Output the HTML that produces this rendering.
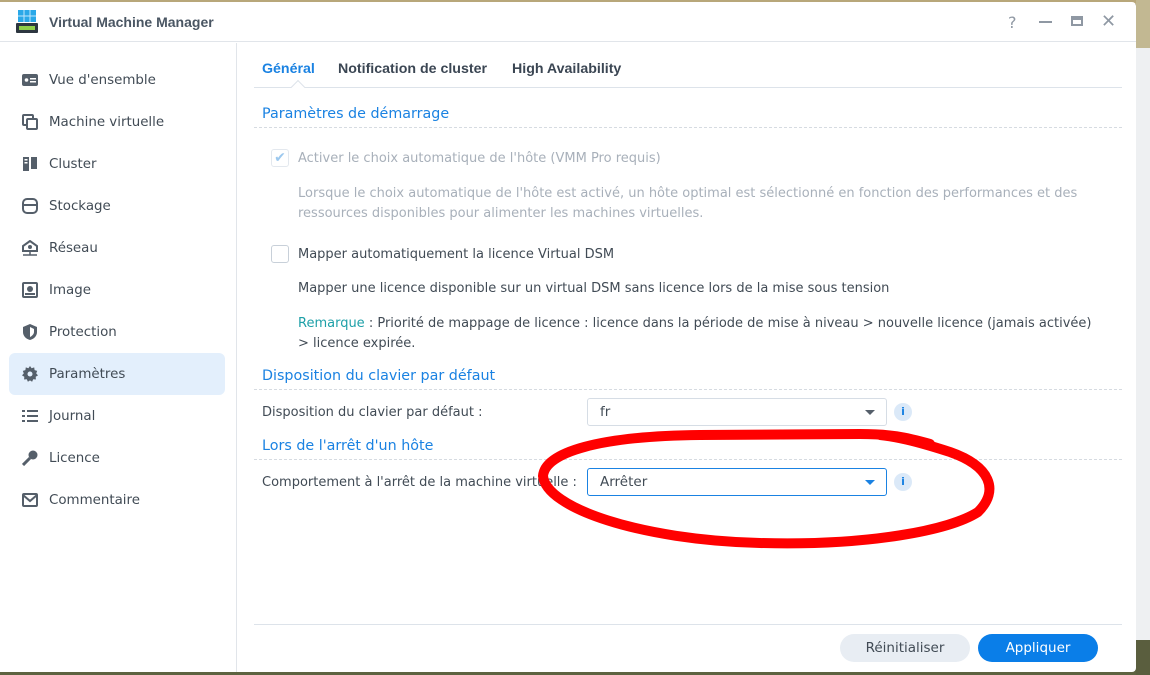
<!DOCTYPE html>
<html><head><meta charset="utf-8"><style>
*{box-sizing:border-box;margin:0;padding:0}
body{width:1150px;height:675px;overflow:hidden;position:relative;font-family:"DejaVu Sans",sans-serif;font-size:13px;color:#414b55;background:#5d6240}
.bgtop{position:absolute;left:0;top:0;width:1150px;height:4px;background:#b8a77a}
.bgright{position:absolute;left:1136px;top:0;width:14px;height:675px;background:linear-gradient(#c2b892 0,#c2b892 48px,#eef0f2 48px,#eef0f2 640px,#5a5e3e 640px)}
.win{position:absolute;left:0;top:2px;width:1136px;height:670px;background:#fff;border-radius:0 4px 4px 0}
.hdr{height:40px;border-bottom:1px solid #e1e5ea;position:relative}
.hdr .t{position:absolute;left:49px;top:12px;font-weight:bold;font-size:14px;color:#4a5663;font-family:"Liberation Sans",sans-serif}
.side{position:absolute;left:0;top:41px;width:237px;bottom:0;border-right:1px solid #e1e5ea}
.it{position:absolute;left:9px;width:216px;height:42px;border-radius:6px;line-height:44px;padding-left:40px;font-size:13.4px}
.it.sel{background:#e3effc}
.it svg{position:absolute;left:13px;top:13px}
.tabs{position:absolute;left:254px;top:44px;width:868px;height:44px;border-bottom:1px solid #dde3ea;font-family:"Liberation Sans",sans-serif}
.tab{position:absolute;top:17px;font-weight:bold;font-size:14.2px;color:#3b4653}
.sec{position:absolute;left:254px;width:868px;color:#1a82e2;font-size:14.3px;padding-left:8px;border-bottom:1px dashed #d6dbe1;height:25px;line-height:22px}
.txt{position:absolute;font-size:13px}
.g{color:#a8b0ba}
.sel2{position:absolute;left:587px;width:300px;height:28px;border:1px solid #d6dde5;border-radius:3px;padding-left:12px;line-height:27px;font-size:13.5px}
.sel2:after{content:"";position:absolute;right:11px;top:11px;border:5px solid transparent;border-top:5px solid #555f6a}
.sel2.b{border-color:#1a82e2}.sel2.b:after{border-top-color:#1a82e2}
.info{position:absolute;left:894px;width:18px;height:18px;border-radius:50%;background:#dbe9f8;color:#1a82e2;font-weight:bold;font-size:11px;text-align:center;line-height:18px}
.btn{position:absolute;top:634px;height:28px;border-radius:14px;text-align:center;line-height:29px;font-size:13.5px}
</style></head><body>
<div class="bgtop"></div><div class="bgright"></div>
<div class="win">
<div class="hdr">
<svg style="position:absolute;left:16px;top:8px" width="22" height="24" viewBox="0 0 22 24"><rect x="2" y="0" width="18" height="12" fill="#2aa8e8"/><path d="M8 0v12M14 0v12M2 6h18" stroke="#bfe6fb" stroke-width="1"/><rect x="0" y="13" width="22" height="10" rx="1" fill="#2d3640"/><rect x="3" y="16" width="16" height="4" fill="#8fcf4a"/></svg>
<div class="t">Virtual Machine Manager</div>
<div style="position:absolute;left:1008px;top:11px;font-size:16px;color:#8f98a3">?</div>
<div style="position:absolute;left:1039px;top:19px;width:13px;height:2px;background:#8f98a3"></div>
<div style="position:absolute;left:1071px;top:14px;width:12px;height:10px;border:2px solid #8f98a3;border-top-width:4px"></div>
<div style="position:absolute;left:1101px;top:9px;font-size:18px;color:#8f98a3">✕</div>
</div>
<div class="side">
<div class="it" style="top:16px"><svg width="16" height="16"><rect x="0" y="2" width="16" height="12" rx="2" fill="#555f6a"/><circle cx="4.5" cy="8" r="1.8" fill="#fff"/><rect x="8" y="6" width="6" height="1.5" fill="#fff"/><rect x="8" y="9" width="6" height="1.5" fill="#fff"/></svg>Vue d'ensemble</div>
<div class="it" style="top:58px"><svg width="16" height="16"><rect x="1" y="1" width="10" height="10" rx="1" fill="none" stroke="#555f6a" stroke-width="2"/><rect x="5" y="5" width="10" height="10" rx="1" fill="#fff" stroke="#555f6a" stroke-width="2"/></svg>Machine virtuelle</div>
<div class="it" style="top:100px"><svg width="16" height="16"><rect x="1" y="1" width="6" height="14" fill="#555f6a"/><rect x="9" y="1" width="6" height="12" fill="#555f6a"/><rect x="2.5" y="3" width="3" height="1.5" fill="#fff"/><rect x="2.5" y="6" width="3" height="1.5" fill="#fff"/></svg>Cluster</div>
<div class="it" style="top:142px"><svg width="16" height="16"><rect x="1" y="1" width="14" height="14" rx="4" fill="none" stroke="#555f6a" stroke-width="2"/><path d="M1 7h14" stroke="#555f6a" stroke-width="2"/></svg>Stockage</div>
<div class="it" style="top:184px"><svg width="16" height="16"><path d="M8 1L1 6v5h14V6z" fill="none" stroke="#555f6a" stroke-width="2"/><circle cx="8" cy="7" r="2" fill="#555f6a"/><path d="M1 15h14M8 11v4" stroke="#555f6a" stroke-width="1.5"/></svg>Réseau</div>
<div class="it" style="top:226px"><svg width="16" height="16"><rect x="1" y="1" width="14" height="14" rx="1" fill="none" stroke="#555f6a" stroke-width="2"/><circle cx="8" cy="7" r="3" fill="#555f6a"/><rect x="3" y="11" width="10" height="2" fill="#555f6a"/></svg>Image</div>
<div class="it" style="top:268px"><svg width="16" height="16"><path d="M8 0L1 3v5c0 4 3 7 7 8 4-1 7-4 7-8V3z" fill="#555f6a"/><path d="M8 3v10c2-1 4-3 4-5V5z" fill="#fff"/></svg>Protection</div>
<div class="it sel" style="top:310px"><svg width="16" height="16" viewBox="0 0 16 16"><path d="M8 0l1.6 2.2 2.6-.8.4 2.7 2.6.8-1 2.5 1.8 2-2.3 1.4.2 2.7-2.7-.2-1.1 2.5L8 14.4l-2.1 1.4-1.1-2.5-2.7.2.2-2.7L0 9.4l1.8-2-1-2.5 2.6-.8.4-2.7 2.6.8z" fill="#555f6a"/><circle cx="8" cy="8" r="2.5" fill="#e3effc"/></svg>Paramètres</div>
<div class="it" style="top:352px"><svg width="16" height="16"><path d="M0 3h3M0 8h3M0 13h3M5 3h11M5 8h11M5 13h11" stroke="#555f6a" stroke-width="2"/></svg>Journal</div>
<div class="it" style="top:394px"><svg width="16" height="16"><circle cx="11" cy="5" r="4.5" fill="#555f6a"/><path d="M8 8L1 15" stroke="#555f6a" stroke-width="3"/></svg>Licence</div>
<div class="it" style="top:436px"><svg width="16" height="16"><rect x="1" y="2" width="14" height="12" rx="1" fill="none" stroke="#555f6a" stroke-width="2"/><path d="M1 3l7 6 7-6" fill="none" stroke="#555f6a" stroke-width="2"/></svg>Commentaire</div>
</div>
</div>
<div class="tabs">
<div class="tab" style="left:8px;color:#1a82e2">Général</div>
<div class="tab" style="left:84px">Notification de cluster</div>
<div class="tab" style="left:258px">High Availability</div>
<div style="position:absolute;left:39px;top:38px;width:10px;height:10px;background:#fff;border-left:1px solid #dde3ea;border-top:1px solid #dde3ea;transform:rotate(45deg)"></div>
</div>
<div class="sec" style="top:103px">Paramètres de démarrage</div>
<div style="position:absolute;left:271px;top:149px;width:18px;height:18px;border:1px solid #e3e8ee;border-radius:3px;color:#9cc8ee;font-size:14px;text-align:center;line-height:16px">✔</div>
<div class="txt g" style="left:298px;top:151px">Activer le choix automatique de l'hôte (VMM Pro requis)</div>
<div class="txt g" style="left:298px;top:184px;line-height:20px">Lorsque le choix automatique de l'hôte est activé, un hôte optimal est sélectionné en fonction des performances et des<br>ressources disponibles pour alimenter les machines virtuelles.</div>
<div style="position:absolute;left:271px;top:245px;width:18px;height:18px;border:1px solid #c8d0d9;border-radius:3px"></div>
<div class="txt" style="left:298px;top:247px">Mapper automatiquement la licence Virtual DSM</div>
<div class="txt" style="left:298px;top:281px">Mapper une licence disponible sur un virtual DSM sans licence lors de la mise sous tension</div>
<div class="txt" style="left:298px;top:314px;line-height:20px"><span style="color:#1ea0a8">Remarque</span> : Priorité de mappage de licence : licence dans la période de mise à niveau &gt; nouvelle licence (jamais activée)<br>&gt; licence expirée.</div>
<div class="sec" style="top:365px">Disposition du clavier par défaut</div>
<div class="txt" style="left:262px;top:405px">Disposition du clavier par défaut :</div>
<div class="sel2" style="top:398px">fr</div><div class="info" style="top:403px">i</div>
<div class="sec" style="top:435px">Lors de l'arrêt d'un hôte</div>
<div class="txt" style="left:262px;top:475px">Comportement à l'arrêt de la machine virtuelle :</div>
<div class="sel2 b" style="top:468px">Arrêter</div><div class="info" style="top:473px">i</div>
<div style="position:absolute;left:254px;top:624px;width:868px;height:1px;background:#dde3ea"></div>
<div class="btn" style="left:840px;width:130px;background:#e8edf3;color:#414b55">Réinitialiser</div>
<div class="btn" style="left:978px;width:120px;background:#0a7ee8;color:#fff">Appliquer</div>
<svg style="position:absolute;left:0;top:0" width="1150" height="675"><path d="M930 444 C905 437 890 434 860 434 L700 435 C600 436 545 452 543 476 C546 508 640 540 760 543 C870 546 950 530 978 512 C1000 490 990 466 950 452 C922 443 900 437 880 435" fill="none" stroke="#f00" stroke-width="10" stroke-linecap="round"/></svg>
</body></html>
